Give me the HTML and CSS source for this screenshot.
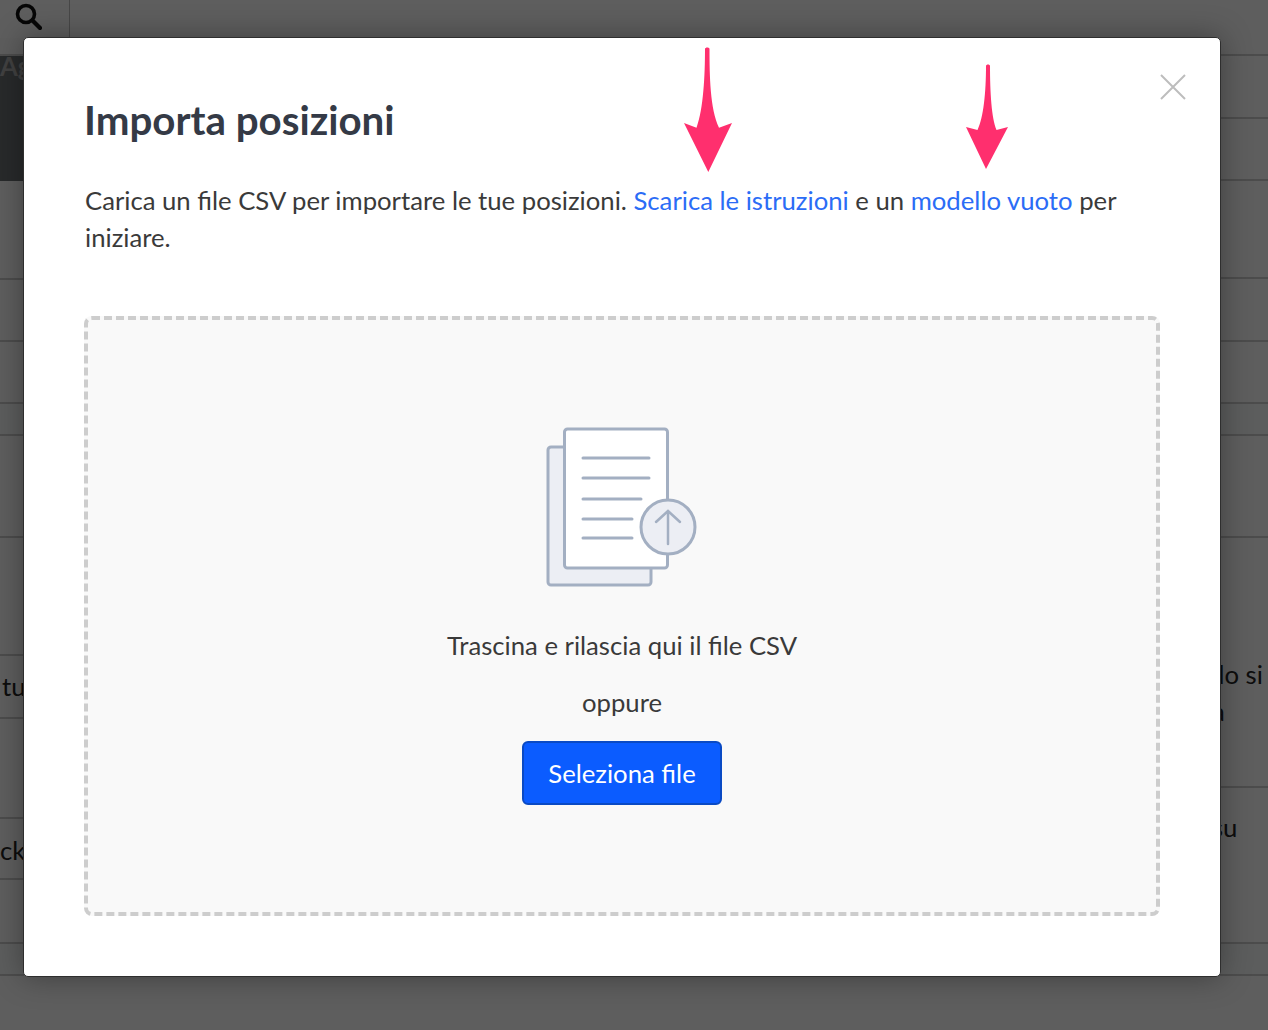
FILE: index.html
```html
<!DOCTYPE html>
<html>
<head>
    <title>Importa posizioni</title>
    <link rel="stylesheet" href="styles.css">
</head>
<body>
    <!-- Page behind the dialog -->
    <div class="topbar">
        <div class="search-box">
            <svg class="search-icon" width="28" height="28" viewBox="0 0 28 28">
                <circle cx="12" cy="12" r="8.5" fill="none" stroke="#111" stroke-width="3.6"/>
                <path d="M18.5 18.5L26 26" fill="none" stroke="#111" stroke-width="4.2" stroke-linecap="round"/>
            </svg>
        </div>
    </div>
    <div class="backdrop-rows">
        <div class="side side-left">
            <div class="row h18 row-head">&nbsp;</div>
            <div class="row row-dark">Ag</div>
            <div class="row h99">&nbsp;</div>
            <div class="row h62">&nbsp;</div>
            <div class="row h62">&nbsp;</div>
            <div class="row h32 row-tint">&nbsp;</div>
            <div class="row h102">&nbsp;</div>
            <div class="row h118">&nbsp;</div>
            <div class="row h63 row-text">tu</div>
            <div class="row h100">&nbsp;</div>
            <div class="row h61 row-text row-click">ckl</div>
            <div class="row h64">&nbsp;</div>
            <div class="row h32 row-tint">&nbsp;</div>
        </div>
        <div class="side side-right">
            <div class="row h18">&nbsp;</div>
            <div class="row h63">&nbsp;</div>
            <div class="row h62">&nbsp;</div>
            <div class="row h98">&nbsp;</div>
            <div class="row h63">&nbsp;</div>
            <div class="row h62">&nbsp;</div>
            <div class="row h32 row-tint">&nbsp;</div>
            <div class="row h102">&nbsp;</div>
            <div class="row h250 row-far">
                <span class="far-text far-do">do si</span>
                <span class="far-text far-a">a</span>
            </div>
            <div class="row h156 row-far">
                <span class="far-text far-su">su</span>
            </div>
            <div class="row h32 row-tint">&nbsp;</div>
        </div>
    </div>

    <div class="overlay"></div>

    <!-- Import dialog -->
    <div class="modal">
        <svg class="close" width="28" height="28" viewBox="0 0 28 28">
            <path d="M2 2L26 26M26 2L2 26" fill="none" stroke="#bdbdbd" stroke-width="2"/>
        </svg>

        <svg class="arrow arrow-one" width="50" height="126" viewBox="0 0 50 126">
            <path d="M21 2C21 0 25.500 0 25.500 2C25.500 28 26 62 35 80.700L48 76L24.300 125L0 76L12.500 80.700C19.500 62 21 28 21 2Z" fill="#ff2f6e"/>
        </svg>
        <svg class="arrow arrow-two" width="44" height="106" viewBox="0 0 44 106">
            <path d="M20 2C20 0 24 0 24 2C24 28 25.500 54 30.500 66L42 63L20 105L0 63L11.500 66C17.500 54 20 28 20 2Z" fill="#ff2f6e"/>
        </svg>

        <h1 class="modal-title">Importa posizioni</h1>
        <p class="intro">Carica un file CSV per importare le tue posizioni. <a class="link">Scarica le istruzioni</a> e un <a class="link">modello vuoto</a> per iniziare.</p>

        <div class="dropzone">
            <svg class="file-icon" width="160" height="170" viewBox="0 0 160 170">
                <rect x="6" y="21" width="103" height="138" rx="3" fill="#eceef4" stroke="#a3afc2" stroke-width="3"/>
                <rect x="22.500" y="3" width="103" height="139" rx="3" fill="#fff" stroke="#a3afc2" stroke-width="3"/>
                <path d="M41 32H107M41 52H107M41 73H99M41 93H90M41 112H90" fill="none" stroke="#a3afc2" stroke-width="3" stroke-linecap="round"/>
                <circle cx="126" cy="101" r="27" fill="#eceef4" stroke="#a3afc2" stroke-width="3"/>
                <path d="M126 118V86M114 96L126 85L138 96" fill="none" stroke="#a3afc2" stroke-width="2.500" stroke-linecap="round"/>
            </svg>
            <p class="drop-text">Trascina e rilascia qui il file CSV</p>
            <p class="drop-or">oppure</p>
            <button class="select-btn">Seleziona file</button>
        </div>
    </div>
</body>
</html>
```

FILE: styles.css
```css
html, body {
    height: 100%;
}

body {
    margin: 0;
    overflow: hidden;
    background-color: #f6f6f6;
    font-family: Lato, "Open Sans", sans-serif;
    color: #333;
}

.topbar {
    height: 38px;
    background-color: #f6f6f6;
}

.search-box {
    width: 70px;
    height: 38px;
    border-right: 1px solid #bbb;
    box-sizing: border-box;
    padding: 2px 0 0 14px;
}

.search-icon {
    display: block;
}

.backdrop-rows {
    display: flex;
    justify-content: space-between;
}

.side-left {
    width: 30px;
}

.side-right {
    width: 60px;
}

.row {
    box-sizing: border-box;
    border-bottom: 2px solid #c8c8c8;
    font-size: 25.7px;
    color: #222;
}

.row-head {
    background-color: #f4f4f4;
}

.row-dark {
    height: 125px;
    background-color: #6b6e72;
    color: #aaa;
    font-weight: bold;
    border-bottom: 0;
    line-height: 20px;
}

.row-tint {
    background-color: #f2f5f3;
}

.row-text {
    padding: 14px 0 0 2px;
    line-height: 32px;
}

.row-click {
    padding: 15px 0 0 0;
}

.row-far {
    line-height: 37px;
}

.far-text {
    display: block;
    white-space: nowrap;
}

.far-do {
    padding-top: 118px;
    margin-left: 2px;
}

.far-a {
    margin-left: 4px;
}

.far-su {
    padding-top: 21px;
    margin-left: 4px;
}

.h18 { height: 18px; }
.h32 { height: 32px; }
.h61 { height: 61px; }
.h62 { height: 62px; }
.h63 { height: 63px; }
.h64 { height: 64px; }
.h98 { height: 98px; }
.h99 { height: 99px; }
.h100 { height: 100px; }
.h102 { height: 102px; }
.h118 { height: 118px; }
.h156 { height: 156px; }
.h250 { height: 250px; }

.overlay {
    position: absolute;
    top: 0;
    left: 0;
    right: 0;
    bottom: 0;
    background-color: rgba(0, 0, 0, 0.62);
}

.modal {
    position: absolute;
    top: 37px;
    left: 23px;
    width: 1198px;
    height: 940px;
    box-sizing: border-box;
    padding: 0 61px;
    background-color: #fff;
    border-radius: 5px;
    border: 1px solid #2e2e2e;
    box-shadow: 0 0 30px rgba(0, 0, 0, 0.35);
}

.close {
    position: absolute;
    top: 35px;
    left: 1135px;
}

.arrow {
    position: absolute;
}

.arrow-one {
    top: 9px;
    left: 660px;
}

.arrow-two {
    top: 26px;
    left: 942px;
}

.modal-title {
    margin: 0 0 0 -1px;
    padding-top: 57px;
    font-size: 40.3px;
    line-height: 50px;
    font-weight: bold;
    color: #343a46;
}

.intro {
    margin: 0;
    padding-top: 37px;
    font-size: 25.7px;
    line-height: 37px;
    color: #3a3a3a;
}

.link {
    color: #2b6cf6;
}

.dropzone {
    display: flex;
    flex-direction: column;
    align-items: center;
    box-sizing: border-box;
    width: 1076px;
    height: 600px;
    margin: 60px 0 0 -1px;
    padding-top: 106px;
    background-color: #f9f9f9;
    border: 4px dashed #cdcdcd;
    border-radius: 8px;
}

.file-icon {
    display: block;
}

.drop-text {
    margin: 31px 0 0;
    font-size: 25.7px;
    line-height: 37px;
    color: #3a3a3a;
}

.drop-or {
    margin: 20px 0 0;
    font-size: 25.7px;
    line-height: 37px;
    color: #3a3a3a;
}

.select-btn {
    width: 200px;
    height: 64px;
    margin-top: 20px;
    padding: 0;
    box-sizing: border-box;
    background-color: #0b5cff;
    border: 2px solid #0a4ac4;
    border-radius: 6px;
    color: #fff;
    font-family: Lato, "Open Sans", sans-serif;
    font-size: 25.7px;
}
```
